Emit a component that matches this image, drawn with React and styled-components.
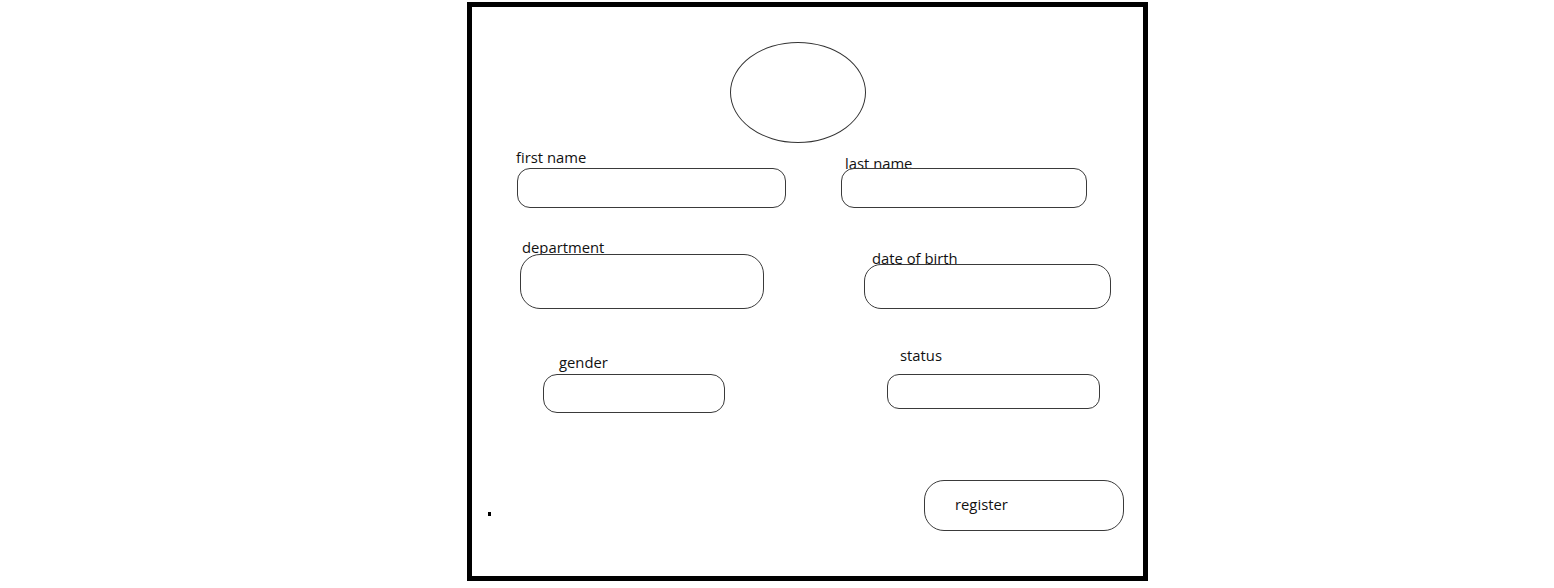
import React from 'react';
import styled, { createGlobalStyle } from 'styled-components';

const GlobalStyle = createGlobalStyle`
  body {
    margin: 0;
    background: #fff;
    font-family: 'Open Sans', 'Noto Sans', sans-serif;
    color: #111;
  }
`;

const Frame = styled.div`
  box-sizing: border-box;
  width: 681px;
  height: 579px;
  margin: 2px 0 0 467px;
  border: 5px solid #000;
  display: flex;
  flex-direction: column;
`;

const Avatar = styled.div`
  box-sizing: border-box;
  width: 136px;
  height: 101px;
  margin: 35px 0 0 258px;
  border: 1px solid #333;
  border-radius: 50%;
`;

const Row = styled.div`
  display: grid;
  grid-template-columns: 369px 1fr;
  align-items: start;
  margin-top: ${({ $gap }) => $gap}px;
`;

const Field = styled.div`
  display: flex;
  flex-direction: column;
  align-items: flex-start;
  margin-top: ${({ $top = 0 }) => $top}px;
  padding-left: ${({ $left }) => $left}px;
`;

const Label = styled.label`
  display: block;
  height: 18px;
  font-size: 14.8px;
  line-height: 18px;
  white-space: nowrap;
  margin-top: 1px;
  margin-left: ${({ $shift = 0 }) => $shift}px;
  margin-bottom: ${({ $gap }) => $gap - 1}px;
`;

const Input = styled.div`
  box-sizing: border-box;
  width: ${({ $w }) => $w}px;
  height: ${({ $h }) => $h}px;
  border: 1px solid #3a3a3a;
  border-radius: ${({ $r }) => $r}px;
  background: #fff;
`;

const Footer = styled.div`
  display: flex;
  justify-content: space-between;
  align-items: flex-start;
  margin-top: 67px;
  padding: 0 19px 0 16px;
`;

const Dot = styled.span`
  width: 3px;
  height: 4px;
  margin-top: 32px;
  background: #000;
`;

const RegisterButton = styled.div`
  box-sizing: border-box;
  width: 200px;
  height: 51px;
  padding: 14px 0 0 30px;
  border: 1px solid #3a3a3a;
  border-radius: 20px;
  font-size: 14.8px;
  line-height: 18px;
`;

const rows = [
  {
    gap: 4,
    fields: [
      { label: 'first name', top: 0, left: 45, shift: -1, lgap: 3, w: 269, h: 40, r: 13 },
      { label: 'last name', top: 6, left: 0, shift: 4, lgap: -3, w: 246, h: 40, r: 13 },
    ],
  },
  {
    gap: 29,
    fields: [
      { label: 'department', top: 0, left: 48, shift: 2, lgap: -1, w: 244, h: 55, r: 20 },
      { label: 'date of birth', top: 11, left: 23, shift: 8, lgap: -2, w: 247, h: 45, r: 17 },
    ],
  },
  {
    gap: 36,
    fields: [
      { label: 'gender', top: 7, left: 71, shift: 16, lgap: 4, w: 182, h: 39, r: 14 },
      { label: 'status', top: 0, left: 46, shift: 13, lgap: 11, w: 213, h: 35, r: 12 },
    ],
  },
];

export default function App() {
  return (
    <>
      <GlobalStyle />
      <Frame>
        <Avatar />
        {rows.map((row, i) => (
          <Row key={i} $gap={row.gap}>
            {row.fields.map((f) => (
              <Field key={f.label} $top={f.top} $left={f.left}>
                <Label $shift={f.shift} $gap={f.lgap}>{f.label}</Label>
                <Input $w={f.w} $h={f.h} $r={f.r} />
              </Field>
            ))}
          </Row>
        ))}
        <Footer>
          <Dot />
          <RegisterButton>register</RegisterButton>
        </Footer>
      </Frame>
    </>
  );
}
